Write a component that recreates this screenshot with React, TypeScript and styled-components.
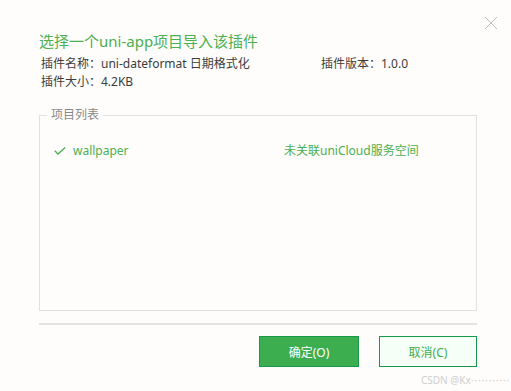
import React from "react";
import styled, { createGlobalStyle } from "styled-components";

const Global = createGlobalStyle`
  html, body { margin: 0; padding: 0; background: #fefdfb; }
  body { font-family: "Noto Sans", "Noto Sans CJK SC", sans-serif; }
`;

const Dialog = styled.div`
  position: relative;
  width: 511px;
  height: 391px;
  box-sizing: border-box;
  padding: 31px 34px 0 39px;
  background: #fefdfb;
  display: flex;
  flex-direction: column;
`;

const Close = styled.button`
  position: absolute;
  top: 16px;
  right: 13px;
  width: 14px;
  height: 14px;
  padding: 0;
  border: none;
  background: transparent;
  display: flex;
`;

const Title = styled.h1`
  margin: 0;
  font-size: 15px;
  line-height: 20px;
  font-weight: 400;
  color: #4caf50;
  white-space: nowrap;
`;

const Info = styled.div`
  margin-top: 4px;
  padding-left: 2px;
  display: grid;
  grid-template-columns: 280px auto;
  font-size: 12px;
  line-height: 18px;
  color: #3c3c3c;
  white-space: nowrap;
`;

const Box = styled.fieldset`
  margin: 16px 0 0 0;
  padding: 0;
  height: 204px;
  box-sizing: border-box;
  border: 1px solid #e2e1df;
  min-width: 0;
`;

const Legend = styled.legend`
  margin-left: 7px;
  padding: 0 4px;
  font-size: 12px;
  line-height: 16px;
  color: #8a8a8a;
`;

const Row = styled.div`
  display: flex;
  align-items: center;
  padding: 19px 0 0 14px;
  font-size: 12px;
  line-height: 18px;
  color: #4caf50;
  white-space: nowrap;
`;

const Check = styled.span`
  width: 19px;
  display: flex;
`;

const Name = styled.span`
  width: 211px;
`;

const Status = styled.span``;

const Divider = styled.hr`
  margin: 12px 0 0 0;
  border: none;
  border-top: 2px solid #e4e3e1;
  height: 0;
`;

const Buttons = styled.div`
  margin-top: 11px;
  display: flex;
  justify-content: flex-end;
  gap: 20px;
`;

const Button = styled.button<{ $primary?: boolean; $w: number }>`
  width: ${(p) => p.$w}px;
  height: 31px;
  box-sizing: border-box;
  border: 1px solid #17994a;
  background: ${(p) => (p.$primary ? "#3dae50" : "#f6fef8")};
  color: ${(p) => (p.$primary ? "#ffffff" : "#3dae50")};
  font-family: "Noto Sans", "Noto Sans CJK SC", sans-serif;
  font-size: 12px;
  padding: 0;
`;

const Watermark = styled.div`
  position: absolute;
  left: 421px;
  top: 373px;
  font-size: 10px;
  line-height: 14px;
  color: #cfcfcf;
  white-space: nowrap;
`;

const Dots = styled.span`
  letter-spacing: 0.9px;
`;

export default function App() {
  return (
    <>
      <Global />
      <Dialog>
        <Close aria-label="close">
          <svg width="14" height="14" viewBox="0 0 14 14">
            <path d="M1 1 L13 13 M13 1 L1 13" stroke="#bdbdbd" strokeWidth="1" fill="none" />
          </svg>
        </Close>
        <Title>选择一个uni-app项目导入该插件</Title>
        <Info>
          <span>插件名称：uni-dateformat 日期格式化</span>
          <span>插件版本：1.0.0</span>
          <span>插件大小：4.2KB</span>
        </Info>
        <Box>
          <Legend>项目列表</Legend>
          <Row>
            <Check>
              <svg width="12" height="8" viewBox="0 0 12 8">
                <path d="M0.8 3.8 L4 7 L11.2 0.6" stroke="#4caf50" strokeWidth="1.3" fill="none" />
              </svg>
            </Check>
            <Name>wallpaper</Name>
            <Status>未关联uniCloud服务空间</Status>
          </Row>
        </Box>
        <Divider />
        <Buttons>
          <Button $primary $w={100}>确定(O)</Button>
          <Button $w={98}>取消(C)</Button>
        </Buttons>
        <Watermark>
          CSDN @Kx<Dots>···········</Dots>
        </Watermark>
      </Dialog>
    </>
  );
}
